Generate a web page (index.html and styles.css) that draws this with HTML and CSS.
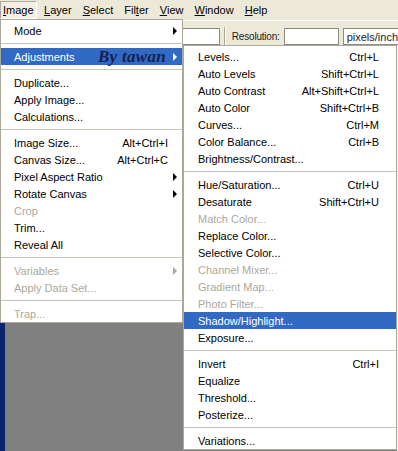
FILE: index.html
```html
<!DOCTYPE html>
<html lang="en">
<head>
  <meta charset="UTF-8">
  <title>Image menu - Adjustments</title>
  <link rel="stylesheet" href="styles.css">
</head>
<body>
  <div class="app">
    <div class="menubar">
      <span class="top-item active"><u>I</u>mage</span>
      <span class="top-item"><u>L</u>ayer</span>
      <span class="top-item"><u>S</u>elect</span>
      <span class="top-item">Fil<u>t</u>er</span>
      <span class="top-item"><u>V</u>iew</span>
      <span class="top-item"><u>W</u>indow</span>
      <span class="top-item"><u>H</u>elp</span>
    </div>

    <div class="options">
      <span class="field field-height"></span>
      <span class="divider"></span>
      <span class="opt-label">Resolution:</span>
      <span class="field field-res"></span>
      <span class="select">pixels/inch</span>
    </div>

    <div class="workspace"></div>

    <!-- Image menu -->
    <div class="menu image-menu">
      <div class="item"><span class="label">Mode</span><span class="arrow"></span></div>
      <div class="sep"></div>
      <div class="item hot"><span class="label">Adjustments</span><span class="stamp">By tawan</span><span class="arrow"></span></div>
      <div class="sep"></div>
      <div class="item"><span class="label">Duplicate...</span></div>
      <div class="item"><span class="label">Apply Image...</span></div>
      <div class="item"><span class="label">Calculations...</span></div>
      <div class="sep"></div>
      <div class="item"><span class="label">Image Size...</span><span class="key">Alt+Ctrl+I</span></div>
      <div class="item"><span class="label">Canvas Size...</span><span class="key">Alt+Ctrl+C</span></div>
      <div class="item"><span class="label">Pixel Aspect Ratio</span><span class="arrow"></span></div>
      <div class="item"><span class="label">Rotate Canvas</span><span class="arrow"></span></div>
      <div class="item off"><span class="label">Crop</span></div>
      <div class="item"><span class="label">Trim...</span></div>
      <div class="item"><span class="label">Reveal All</span></div>
      <div class="sep"></div>
      <div class="item off"><span class="label">Variables</span><span class="arrow"></span></div>
      <div class="item off"><span class="label">Apply Data Set...</span></div>
      <div class="sep"></div>
      <div class="item off"><span class="label">Trap...</span></div>
    </div>

    <!-- Adjustments submenu -->
    <div class="menu adjust-menu">
      <div class="item"><span class="label">Levels...</span><span class="key">Ctrl+L</span></div>
      <div class="item"><span class="label">Auto Levels</span><span class="key">Shift+Ctrl+L</span></div>
      <div class="item"><span class="label">Auto Contrast</span><span class="key">Alt+Shift+Ctrl+L</span></div>
      <div class="item"><span class="label">Auto Color</span><span class="key">Shift+Ctrl+B</span></div>
      <div class="item"><span class="label">Curves...</span><span class="key">Ctrl+M</span></div>
      <div class="item"><span class="label">Color Balance...</span><span class="key">Ctrl+B</span></div>
      <div class="item"><span class="label">Brightness/Contrast...</span></div>
      <div class="sep"></div>
      <div class="item"><span class="label">Hue/Saturation...</span><span class="key">Ctrl+U</span></div>
      <div class="item"><span class="label">Desaturate</span><span class="key">Shift+Ctrl+U</span></div>
      <div class="item off"><span class="label">Match Color...</span></div>
      <div class="item"><span class="label">Replace Color...</span></div>
      <div class="item"><span class="label">Selective Color...</span></div>
      <div class="item off"><span class="label">Channel Mixer...</span></div>
      <div class="item off"><span class="label">Gradient Map...</span></div>
      <div class="item off"><span class="label">Photo Filter...</span></div>
      <div class="item hot"><span class="label">Shadow/Highlight...</span></div>
      <div class="item"><span class="label">Exposure...</span></div>
      <div class="sep"></div>
      <div class="item"><span class="label">Invert</span><span class="key">Ctrl+I</span></div>
      <div class="item"><span class="label">Equalize</span></div>
      <div class="item"><span class="label">Threshold...</span></div>
      <div class="item"><span class="label">Posterize...</span></div>
      <div class="sep"></div>
      <div class="item"><span class="label">Variations...</span></div>
    </div>
  </div>
</body>
</html>
```

FILE: styles.css
```css
/* XP-era Photoshop chrome */
:root {
  --chrome: #ece9d8;
  --edge: #aca899;
  --hot: #316ac5;
  --dim: #aca899;
  --canvas: #808080;
  --row: 17px;
}

* { box-sizing: border-box; margin: 0; padding: 0; }
body {
  font-family: "Liberation Sans", Arial, sans-serif;
  font-size: 11px;
  color: #000;
  background: var(--chrome);
  overflow: hidden;
}

.app {
  position: relative;
  width: 398px;
  height: 451px;
  display: flex;
  flex-direction: column;
  overflow: hidden;
}

/* Menu bar */
.menubar {
  height: 20px;
  display: flex;
  align-items: stretch;
  background: var(--chrome);
}
.top-item {
  display: flex;
  align-items: center;
  padding: 0 5.5px;
  margin-top: 1px;
  height: 18px;
}
.top-item u { text-decoration: underline; text-underline-offset: 1px; }
.top-item.active {
  padding: 0 2px 0 2px;
  margin-right: 2px;
  border: 1px solid var(--edge);
  border-right-color: #fff;
  border-bottom-color: #fff;
  background: #f1efe6;
}

/* Options bar */
.options {
  height: 27px;
  display: flex;
  align-items: flex-start;
  padding: 7px 0 0 160px;
  border-top: 1px solid #fff;
  background: var(--chrome);
  font-size: 10px;
  color: #222;
}
.field {
  height: 17px;
  background: #fff;
  border: 1px solid #8d8c84;
}
.field-height { width: 61px; }
.field-res { width: 56px; margin-left: 4px; }
.divider {
  width: 2px;
  height: 19px;
  margin: -1px 4px 0 4px;
  border-left: 1px solid var(--edge);
  border-right: 1px solid #fff;
}
.opt-label { line-height: 17px; margin-left: 2px; letter-spacing: -0.2px; }
.select {
  flex: 1;
  height: 17px;
  margin-left: 4px;
  padding-left: 3px;
  line-height: 16px;
  background: #fff;
  border: 1px solid #8d8c84;
  border-right: none;
  font-size: 11px;
}

/* Document area */
.workspace {
  flex: 1;
  background: var(--canvas);
  border-left: 5px solid #0b2470;
  border-right: 1px solid #f4f3ee;
}

/* Drop-down menus */
.menu {
  position: absolute;
  background: #fff;
  border: 1px solid var(--edge);
  padding-top: 2px;
}
.image-menu { top: 19px; left: 0; width: 183px; }
.adjust-menu { top: 45px; left: 183px; width: 214px; }

.item {
  display: flex;
  align-items: center;
  height: var(--row);
  padding: 0 4px 0 13px;
  white-space: nowrap;
}
.adjust-menu .item { padding-left: 14px; }
.item .label { flex: 1; }
.item .key { margin-right: 10px; }
.adjust-menu .item .key { margin-right: 13px; }

.item.hot { background: var(--hot); color: #fff; }
.item.off { color: var(--dim); }

.arrow {
  width: 0;
  height: 0;
  border-left: 4px solid #000;
  border-top: 4px solid transparent;
  border-bottom: 4px solid transparent;
  margin-right: 1px;
}
.item.hot .arrow { border-left-color: #fff; }
.item.off .arrow { border-left-color: var(--dim); }

.stamp {
  margin-right: 7px;
  font-family: "Liberation Serif", "DejaVu Serif", serif;
  font-weight: bold;
  font-style: italic;
  font-size: 17px;
  color: #17204f;
  letter-spacing: 0.3px;
}

.sep {
  height: 9px;
  padding-top: 4px;
}
.sep::after {
  content: "";
  display: block;
  border-top: 1px solid #c6c3b6;
}
```
